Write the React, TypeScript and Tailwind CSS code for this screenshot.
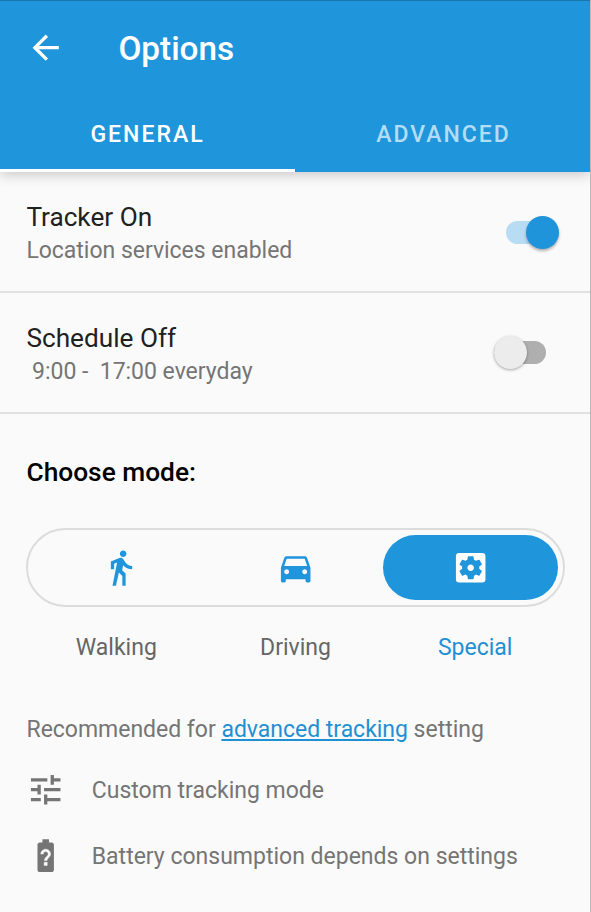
import type { ReactNode } from "react";
import {
  MdArrowBack,
  MdDirectionsWalk,
  MdSettingsApplications,
  MdTune,
} from "react-icons/md";

function CarIcon() {
  return (
    <svg viewBox="0 0 24 24" width="39.4" height="39.4" fill="currentColor">
      <path d="M18.92 6.01C18.72 5.42 18.16 5 17.5 5h-11c-.66 0-1.21.42-1.42 1.01L3 12v8c0 .55.45 1 1 1h1c.55 0 1-.45 1-1v-1h12v1c0 .55.45 1 1 1h1c.55 0 1-.45 1-1v-8l-2.08-5.99zM6.5 16c-.83 0-1.5-.67-1.5-1.5S5.67 13 6.5 13s1.5.67 1.5 1.5S7.33 16 6.5 16zm11 0c-.83 0-1.5-.67-1.5-1.5s.67-1.5 1.5-1.5 1.5.67 1.5 1.5-.67 1.5-1.5 1.5zM5 11l1.5-4.5h11L19 11H5z" />
    </svg>
  );
}

function BatteryIcon() {
  return (
    <svg viewBox="0 0 24 24" width="39.4" height="39.4" fill="currentColor">
      <path d="M15.67 4H14V2h-4v2H8.33C7.6 4 7 4.6 7 5.33v15.33C7 21.4 7.6 22 8.33 22h7.33c.74 0 1.34-.6 1.34-1.33V5.33C17 4.6 16.4 4 15.67 4z" />
      <path
        fill="#fafafa"
        stroke="#fafafa"
        strokeWidth="0.25"
        d="M12.95 17.95h-1.9v-1.9h1.9v1.9zM14.3 12.69s-.38.42-.67.71c-.48.48-.83 1.15-.83 1.6h-1.6c0-.83.46-1.52.93-2l.93-.94c.27-.27.44-.65.44-1.06 0-.83-.67-1.5-1.5-1.5s-1.5.67-1.5 1.5H9c0-1.66 1.34-3 3-3s3 1.34 3 3c0 .66-.27 1.26-.7 1.69z"
      />
    </svg>
  );
}

function Switch({ on }: { on: boolean }) {
  return on ? (
    <div className="mt-px mr-[31px] flex h-[23px] w-[53px] items-center justify-end rounded-full bg-[#b8dcf4]">
      <div className="size-[33px] shrink-0 rounded-full bg-[#1f94da] shadow-[0_2px_3px_rgba(0,0,0,0.3)]" />
    </div>
  ) : (
    <div className="mr-[44px] flex h-[23px] w-[52px] items-center rounded-full bg-[#afafaf]">
      <div className="size-[33px] shrink-0 rounded-full bg-[#ececec] shadow-[0_1px_3px_rgba(0,0,0,0.35)]" />
    </div>
  );
}

function Row({ title, detail, on }: { title: string; detail: string; on: boolean }) {
  return (
    <div className="flex h-[121px] items-center justify-between border-b-2 border-[#e1e1e1] pl-[26.4px]">
      <div className="pt-[4px]">
        <div className="text-[26.2px] leading-[34px] text-[#212121]">{title}</div>
        <div className="text-[23px] leading-[33px] tracking-[-0.02px] whitespace-pre text-[#757575]">{detail}</div>
      </div>
      <Switch on={on} />
    </div>
  );
}

function Info({ icon, children }: { icon: ReactNode; children: ReactNode }) {
  return (
    <div className="flex h-[66px] items-center gap-[26.4px] text-[#757575]">
      {icon}
      <span className="pt-[2px] text-[23px] leading-[30px]">{children}</span>
    </div>
  );
}

export default function App() {
  return (
    <div className="flex h-[912px] w-[591px] flex-col overflow-hidden border-r border-[#b9b9b9] bg-[#fafafa] font-['Roboto','Liberation_Sans',sans-serif]">
      <header className="z-10 flex h-[172px] shrink-0 flex-col border-t border-[#1975ae] bg-[#1f96dc] text-white shadow-[0_3px_12px_rgba(0,0,0,0.2)]">
        <div className="flex h-[93px] items-center gap-[53px] pl-[26px]">
          <MdArrowBack size={39.4} />
          <h1 className="pt-[2px] text-[33.3px] font-medium">Options</h1>
        </div>
        <nav className="flex flex-1 text-[23px] font-medium">
          <div className="flex w-[295px] items-center justify-center border-b-[3px] border-white pt-[7px] tracking-[2px]">GENERAL</div>
          <div className="flex flex-1 items-center justify-center pt-[4px] pl-[2px] text-[#b3dcf5] tracking-[2px]">ADVANCED</div>
        </nav>
      </header>
      <main>
        <Row title="Tracker On" detail="Location services enabled" on />
        <Row title="Schedule Off" detail=" 9:00 -  17:00 everyday" on={false} />
        <section className="px-[26px] pt-[41px]">
          <h2 className="pl-[0.5px] text-[26.3px] leading-[34px] font-medium text-black">Choose mode:</h2>
          <div className="mt-[39px] grid h-[79px] w-[539px] grid-cols-3 rounded-full border-2 border-[#dcdcdc] p-[5px] text-[#1f96dc]">
            <div className="flex items-center justify-center">
              <MdDirectionsWalk size={39.4} />
            </div>
            <div className="flex items-center justify-center">
              <CarIcon />
            </div>
            <div className="flex items-center justify-center rounded-full bg-[#1f96dc] text-white">
              <MdSettingsApplications size={39.4} />
            </div>
          </div>
          <div className="mt-[26px] grid w-[539px] grid-cols-3 text-center text-[23px] leading-[30px] text-[#666666]">
            <span className="pl-px">Walking</span>
            <span>Driving</span>
            <span className="text-[#1f90d3]">Special</span>
          </div>
          <p className="mt-[52px] mb-[12px] pl-[0.5px] text-[23px] leading-[30px] tracking-[-0.02px] whitespace-nowrap text-[#757575]">
            Recommended for <a className="text-[#1f90d3] underline">advanced tracking</a> setting
          </p>
          <Info icon={<MdTune size={39.4} />}>Custom tracking mode</Info>
          <Info icon={<BatteryIcon />}>Battery consumption depends on settings</Info>
        </section>
      </main>
    </div>
  );
}
